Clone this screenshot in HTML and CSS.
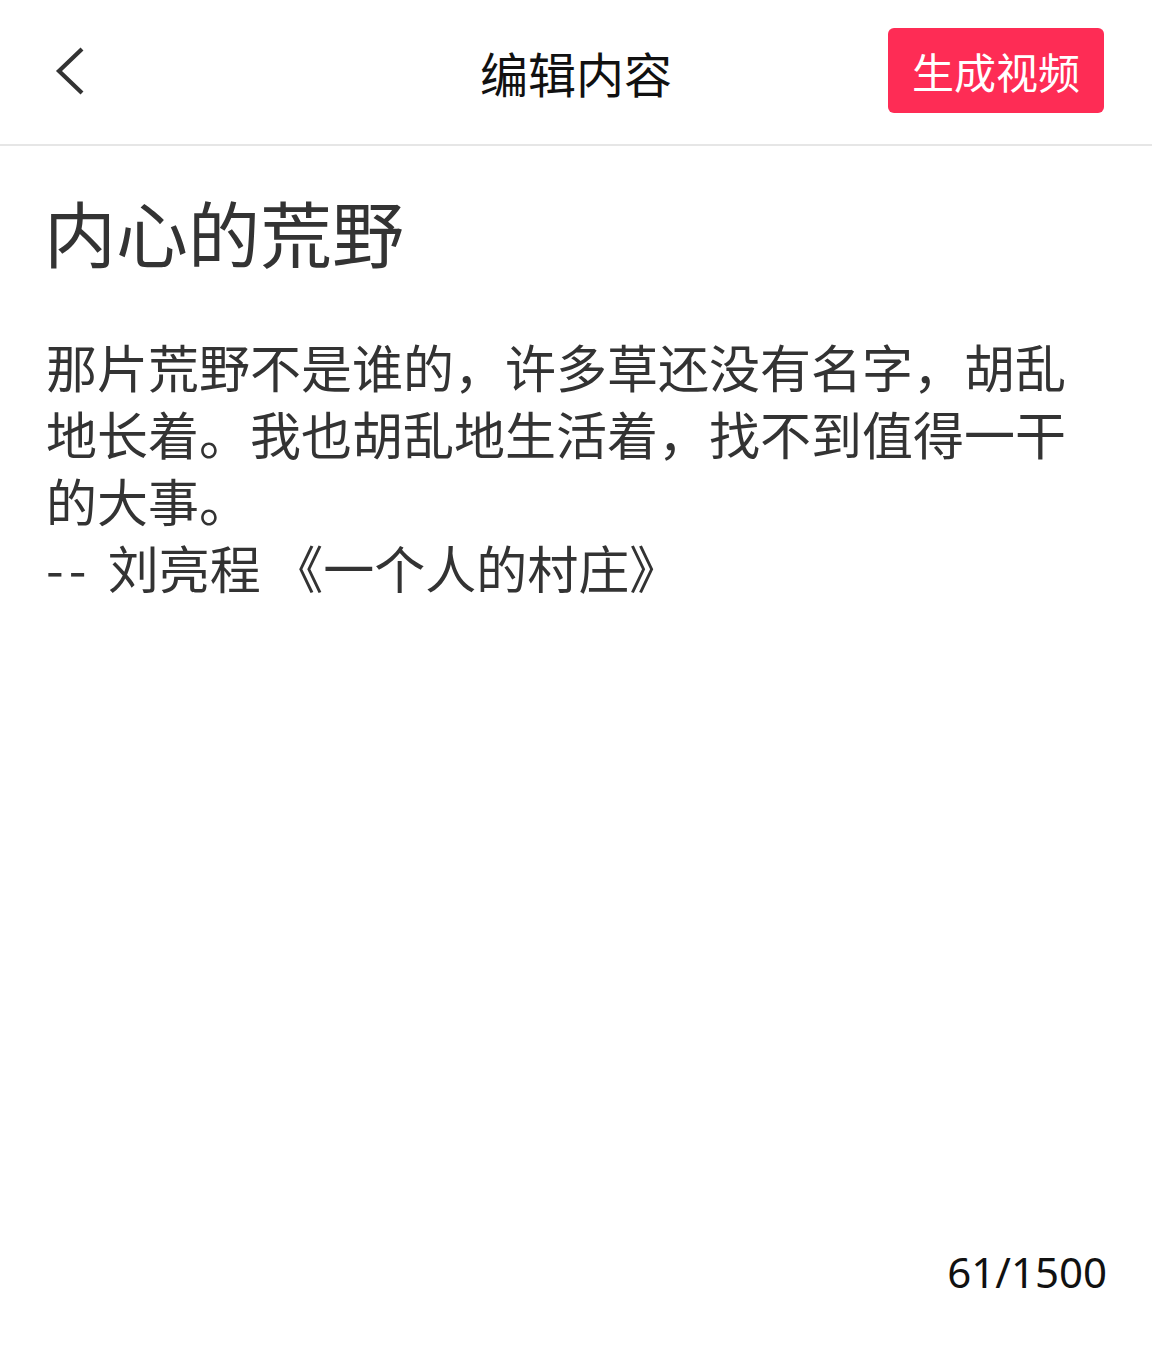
FILE: index.html
```html
<!DOCTYPE html>
<html lang="zh-CN">
<head>
<meta charset="utf-8">
<title>编辑内容</title>
<link rel="stylesheet" href="styles.css">
</head>
<body>
<div class="page">
  <header class="topbar">
    <div class="back">
      <svg width="40" height="56" viewBox="0 0 40 56" aria-hidden="true">
        <polyline points="33,6 10,28 33,50" fill="none" stroke="#333" stroke-width="4.2" stroke-linecap="butt" stroke-linejoin="miter"/>
      </svg>
    </div>
    <h1 class="topbar-title">编辑内容</h1>
    <button class="primary-btn">生成视频</button>
  </header>
  <main class="editor">
    <h2 class="doc-title">内心的荒野</h2>
    <p class="doc-body">那片荒野不是谁的，许多草还没有名字，胡乱地长着。我也胡乱地生活着，找不到值得一干的大事。<br><span class="dash">-- </span>刘亮程 《一个人的村庄》</p>
    <div class="counter">61/1500</div>
  </main>
</div>
</body>
</html>
```

FILE: styles.css
```css
html, body {
  margin: 0;
  padding: 0;
  background: #ffffff;
}

body {
  font-family: "Noto Sans CJK SC", "Noto Sans", sans-serif;
  color: #333333;
}

.page {
  width: 1152px;
  height: 1351px;
  display: flex;
  flex-direction: column;
}

.topbar {
  height: 144px;
  border-bottom: 2px solid #e6e6e6;
  display: flex;
  align-items: center;
  justify-content: space-between;
  padding: 0 48px 0 49px;
  position: relative;
  flex: none;
}

.back {
  width: 60px;
  height: 60px;
  display: flex;
  align-items: center;
  margin-top: -2px;
}

.topbar-title {
  margin: 0;
  font-size: 48px;
  font-weight: 400;
  color: #111111;
  position: absolute;
  left: 0;
  right: 0;
  text-align: center;
  pointer-events: none;
  line-height: 1;
  top: 48px;
}

.primary-btn {
  width: 216px;
  height: 85px;
  margin-top: -4px;
  border: none;
  border-radius: 6px;
  background: #fe2c55;
  color: #ffffff;
  font-family: "Noto Sans CJK SC", sans-serif;
  font-size: 42px;
  font-weight: 400;
  padding: 0;
  display: flex;
  align-items: center;
  justify-content: center;
}

.editor {
  flex: 1;
  display: flex;
  flex-direction: column;
  padding: 42px 45px 54px 46px;
}

.doc-title {
  margin: 0 0 0 -2px;
  font-size: 72px;
  font-weight: 400;
  line-height: 86px;
  color: #333333;
}

.doc-body {
  margin: 59px 0 0 0;
  font-size: 51px;
  line-height: 67px;
  color: #333333;
  width: 1040px;
}

.dash {
  letter-spacing: 5px;
}

.counter {
  margin-top: auto;
  align-self: flex-end;
  font-family: "Noto Sans", sans-serif;
  font-size: 42px;
  line-height: 50px;
  color: #111111;
}
```
